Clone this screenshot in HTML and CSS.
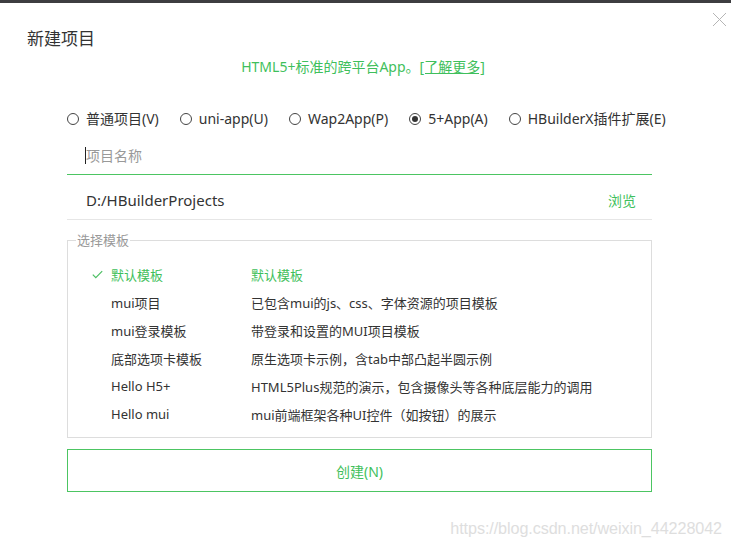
FILE: index.html
```html
<!DOCTYPE html>
<html>
<head>
<meta charset="utf-8">
<link rel="stylesheet" href="styles.css">
</head>
<body>
<div class="topbar"></div>
<div class="page">
  <svg class="close" width="15" height="15" viewBox="0 0 15 15"><path d="M1 1L14 14M14 1L1 14" stroke="#b5b5b5" stroke-width="1" fill="none"/></svg>
  <div class="title">新建项目</div>
  <div class="subtitle">HTML5+标准的跨平台App。<span class="more">[了解更多]</span></div>
  <div class="content">
    <div class="radios">
      <label class="radio"><span class="dot"></span>普通项目(V)</label>
      <label class="radio"><span class="dot"></span>uni-app(U)</label>
      <label class="radio"><span class="dot"></span>Wap2App(P)</label>
      <label class="radio"><span class="dot on"></span>5+App(A)</label>
      <label class="radio"><span class="dot"></span>HBuilderX插件扩展(E)</label>
    </div>
    <div class="name-row"><span class="caret"></span><span class="placeholder">项目名称</span></div>
    <div class="path-row"><span class="path">D:/HBuilderProjects</span><span class="browse">浏览</span></div>
    <fieldset class="templates">
      <legend>选择模板</legend>
      <div class="list">
        <div class="row sel"><span class="check"><svg width="11" height="9" viewBox="0 0 11 9"><path d="M0.8 4.6L3.8 7.6L10.2 1.2" stroke="#4cbf63" stroke-width="1.2" fill="none"/></svg></span><span>默认模板</span><span>默认模板</span></div>
        <div class="row"><span class="check"></span><span>mui项目</span><span>已包含mui的js、css、字体资源的项目模板</span></div>
        <div class="row"><span class="check"></span><span>mui登录模板</span><span>带登录和设置的MUI项目模板</span></div>
        <div class="row"><span class="check"></span><span>底部选项卡模板</span><span>原生选项卡示例，含tab中部凸起半圆示例</span></div>
        <div class="row"><span class="check"></span><span>Hello H5+</span><span>HTML5Plus规范的演示，包含摄像头等各种底层能力的调用</span></div>
        <div class="row"><span class="check"></span><span>Hello mui</span><span>mui前端框架各种UI控件（如按钮）的展示</span></div>
      </div>
    </fieldset>
    <div class="create">创建(N)</div>
  </div>
  <div class="watermark">https://blog.csdn.net/weixin_44228042</div>
</div>
</body>
</html>
```
FILE: styles.css
```css
html, body {
  margin: 0;
  padding: 0;
  background: #fff;
}
body {
  font-family: "Noto Sans", "Noto Sans CJK SC", sans-serif;
  color: #333;
  width: 731px;
  height: 549px;
  overflow: hidden;
}
.topbar {
  height: 3px;
  background: #3d3d40;
}
.page {
  position: relative;
  height: 546px;
}
.close {
  position: absolute;
  top: 9px;
  right: 4px;
}
.title {
  padding: 24px 0 0 27px;
  font-size: 17px;
  line-height: 24px;
  height: 24px;
  color: #333;
}
.subtitle {
  margin-top: 6px;
  text-align: center;
  font-size: 14px;
  line-height: 20px;
  color: #3fbf5c;
  padding-right: 5px;
}
.more {
  text-decoration: underline;
}
.content {
  margin: 0 79px 0 67px;
}
.radios {
  margin-top: 32px;
  display: flex;
  gap: 21px;
  font-size: 14px;
  line-height: 20px;
  height: 20px;
}
.radio {
  display: flex;
  align-items: center;
  white-space: nowrap;
}
.dot {
  width: 10px;
  height: 10px;
  border: 1.3px solid #444;
  border-radius: 50%;
  margin-right: 7px;
  position: relative;
  box-sizing: content-box;
}
.dot.on::after {
  content: "";
  position: absolute;
  left: 2px;
  top: 2px;
  width: 6px;
  height: 6px;
  border-radius: 50%;
  background: #333;
}
.name-row {
  margin-top: 7px;
  height: 38px;
  border-bottom: 1px solid #4cc562;
  display: flex;
  align-items: center;
  padding-left: 18px;
  font-size: 14px;
}
.caret {
  width: 1px;
  height: 17px;
  background: #222;
}
.placeholder {
  color: #999;
}
.path-row {
  margin-top: 6px;
  height: 38px;
  border-bottom: 1px solid #e6e6e6;
  display: flex;
  align-items: center;
  justify-content: space-between;
  padding: 0 16px 0 19px;
  font-size: 15px;
}
.path {
  color: #333;
}
.browse {
  color: #3fbf5c;
  font-size: 14px;
}
.templates {
  margin: 12px 0 0 0;
  padding: 0 0 9px 0;
  border: 1px solid #ddd;
  min-width: 0;
}
.templates legend {
  margin-left: 8px;
  padding: 0 1px;
  font-size: 13px;
  line-height: 16px;
  color: #999;
}
.list {
  padding-top: 12px;
}
.row {
  display: grid;
  grid-template-columns: 19px 140px 1fr;
  padding-left: 24px;
  height: 28px;
  align-items: center;
  font-size: 13px;
  color: #333;
}
.row.sel {
  color: #3fbf5c;
}
.check {
  display: flex;
  align-items: center;
}
.create {
  margin-top: 11px;
  height: 41px;
  border: 1px solid #4cc562;
  display: flex;
  align-items: center;
  justify-content: center;
  color: #3fbf5c;
  font-size: 14px;
}
.watermark {
  position: absolute;
  right: 9px;
  top: 516px;
  font-family: "Liberation Sans", Arial, sans-serif;
  font-size: 16.2px;
  color: #dedede;
  letter-spacing: -0.1px;
}
```
